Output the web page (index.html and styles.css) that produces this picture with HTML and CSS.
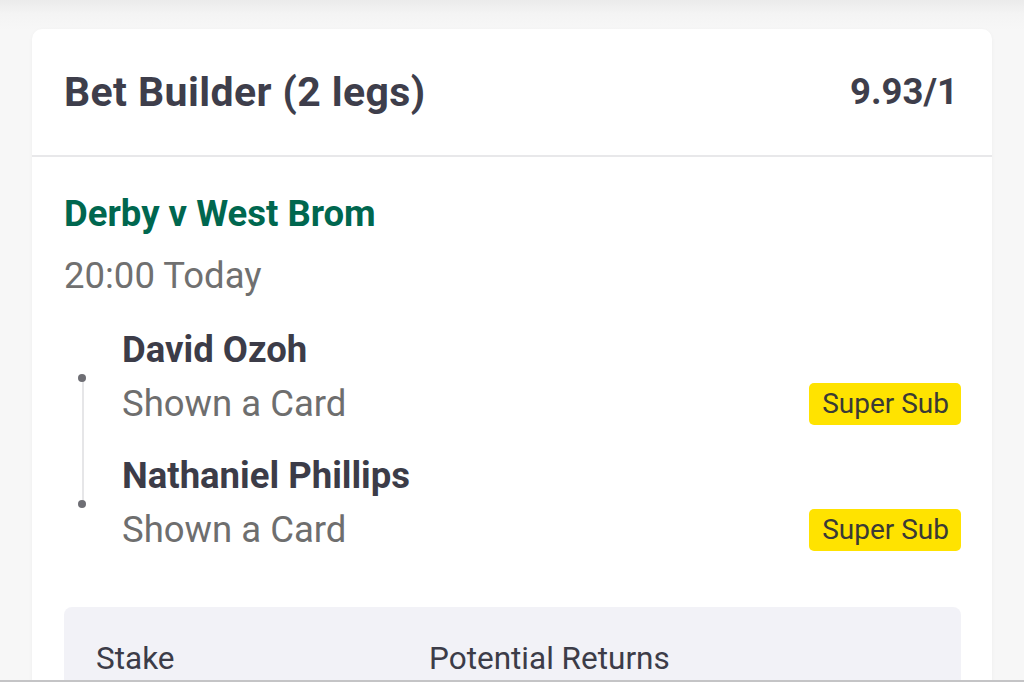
FILE: index.html
```html
<!DOCTYPE html>
<html lang="en">
<head>
<meta charset="utf-8">
<title>Bet Builder</title>
<link rel="stylesheet" href="styles.css">
</head>
<body>
<main class="page">
  <section class="card">
    <header class="card-header">
      <h1 class="title">Bet Builder (2 legs)</h1>
      <span class="odds">9.93/1</span>
    </header>
    <div class="card-body">
      <div class="match">Derby v West Brom</div>
      <div class="time">20:00 Today</div>
      <div class="legs">
        <span class="track"></span>
        <div class="leg">
          <span class="dot"></span>
          <div class="leg-name">David Ozoh</div>
          <div class="leg-row">
            <span class="leg-desc">Shown a Card</span>
            <span class="badge">Super Sub</span>
          </div>
        </div>
        <div class="leg">
          <span class="dot"></span>
          <div class="leg-name">Nathaniel Phillips</div>
          <div class="leg-row">
            <span class="leg-desc">Shown a Card</span>
            <span class="badge">Super Sub</span>
          </div>
        </div>
      </div>
      <div class="stake-box">
        <span class="stake-label">Stake</span>
        <span class="stake-label">Potential Returns</span>
      </div>
    </div>
  </section>
</main>
<div class="bottom-bar"></div>
</body>
</html>
```

FILE: styles.css
```css
* { box-sizing: border-box; }
html, body { margin: 0; padding: 0; }
body {
  height: 682px;
  overflow: hidden;
  font-family: Roboto, "Liberation Sans", Arial, sans-serif;
  background: linear-gradient(#ebebeb 0px, #f4f4f4 14px, #f7f7f7 30px);
}
.page {
  padding: 29px 32px 0 32px;
}
.card {
  background: #ffffff;
  border-radius: 10px;
  box-shadow: 0 1px 4px rgba(0, 0, 0, 0.04);
}
.card-header {
  height: 128px;
  display: flex;
  align-items: center;
  justify-content: space-between;
  padding: 0 34px 0 32px;
  border-bottom: 2px solid #e8e8ea;
}
.title {
  margin: 0;
  font-size: 41px;
  font-weight: 700;
  letter-spacing: 0.4px;
  color: #3e3e4b;
  line-height: 48px;
}
.odds {
  font-size: 36.5px;
  font-weight: 700;
  color: #3e3e4b;
  line-height: 48px;
}
.card-body {
  padding: 35px 31px 40px 32px;
}
.match {
  font-size: 36.5px;
  font-weight: 700;
  color: #00674f;
  line-height: 44px;
}
.time {
  margin-top: 18px;
  font-size: 36.5px;
  color: #707070;
  line-height: 44px;
}
.legs {
  position: relative;
  margin-top: 30px;
  padding-left: 58px;
  display: flex;
  flex-direction: column;
  gap: 28px;
}
.track {
  position: absolute;
  left: 18px;
  top: 50px;
  width: 2px;
  height: 126px;
  background: #e6e6e8;
}
.leg {
  position: relative;
}
.dot {
  position: absolute;
  left: -44px;
  top: 46px;
  width: 8px;
  height: 8px;
  border-radius: 50%;
  background: #6e6e74;
}
.leg-name {
  font-size: 36.5px;
  font-weight: 700;
  color: #3c3c48;
  line-height: 44px;
}
.leg-row {
  margin-top: 10px;
  display: flex;
  align-items: center;
  justify-content: space-between;
}
.leg-desc {
  font-size: 36.5px;
  color: #6e6e6e;
  line-height: 44px;
}
.badge {
  background: #ffe300;
  color: #3a3a36;
  font-size: 28px;
  line-height: 42px;
  padding: 0 12px 0 13px;
  border-radius: 5px;
}
.stake-box {
  margin-top: 55px;
  background: #f2f2f7;
  border-radius: 8px;
  padding: 34px 32px 40px 32px;
  display: grid;
  grid-template-columns: 333px 1fr;
}
.stake-label {
  font-size: 31.5px;
  color: #3c3c48;
  line-height: 36px;
}
.bottom-bar {
  position: fixed;
  left: 0;
  right: 0;
  bottom: 0;
  height: 2px;
  background: #c4c4c6;
}
```
